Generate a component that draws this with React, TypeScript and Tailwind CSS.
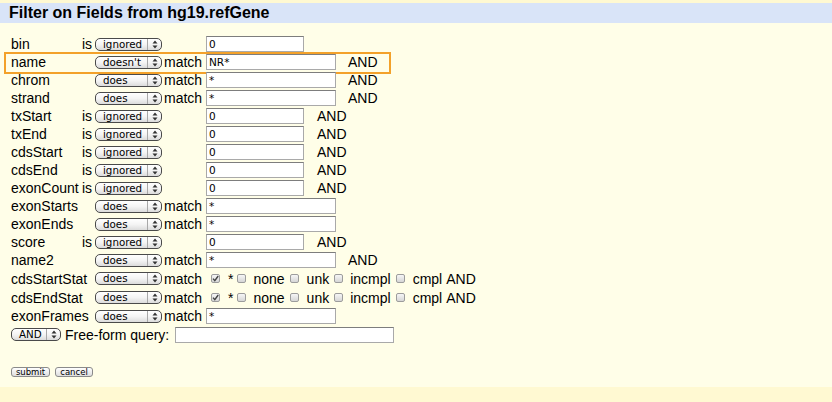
import React from "react";

type Field = {
  name: string;
  kind: "is" | "match" | "stat";
  op?: string;
  value?: string;
  and?: boolean;
  highlight?: boolean;
};

const fields: Field[] = [
  { name: "bin", kind: "is", value: "0" },
  { name: "name", kind: "match", op: "doesn't", value: "NR*", and: true, highlight: true },
  { name: "chrom", kind: "match", op: "does", value: "*", and: true },
  { name: "strand", kind: "match", op: "does", value: "*", and: true },
  { name: "txStart", kind: "is", value: "0", and: true },
  { name: "txEnd", kind: "is", value: "0", and: true },
  { name: "cdsStart", kind: "is", value: "0", and: true },
  { name: "cdsEnd", kind: "is", value: "0", and: true },
  { name: "exonCount", kind: "is", value: "0", and: true },
  { name: "exonStarts", kind: "match", op: "does", value: "*" },
  { name: "exonEnds", kind: "match", op: "does", value: "*" },
  { name: "score", kind: "is", value: "0", and: true },
  { name: "name2", kind: "match", op: "does", value: "*", and: true },
  { name: "cdsStartStat", kind: "stat", op: "does" },
  { name: "cdsEndStat", kind: "stat", op: "does" },
  { name: "exonFrames", kind: "match", op: "does", value: "*" },
];

function Arrows() {
  return (
    <svg width="6" height="9" viewBox="0 0 6 9">
      <path d="M0.5 3.6 L3 0.6 L5.5 3.6Z M0.5 5.4 L3 8.4 L5.5 5.4Z" fill="#333" />
    </svg>
  );
}

function Select({ value, w }: { value: string; w: string }) {
  return (
    <span
      className={`inline-flex h-[13px] items-stretch rounded-[5px] border border-[#4a4a4a] bg-gradient-to-b from-white via-[#f4f4f4] to-[#dcdcdc] font-['DejaVu_Sans',sans-serif] text-[10.3px] leading-none text-black ${w}`}
    >
      <span className="flex flex-1 items-center pl-[7px]">{value}</span>
      <span className="flex w-[14px] items-center justify-center border-l border-[#a8a8a8]">
        <Arrows />
      </span>
    </span>
  );
}

function TextBox({ value, w }: { value?: string; w: string }) {
  return (
    <span
      className={`flex h-[16px] items-center border border-[#a9a9a9] border-t-[#7d7d7d] bg-white pl-[2px] font-['DejaVu_Sans',sans-serif] text-[10.5px] leading-none ${w}`}
    >
      {value}
    </span>
  );
}

function Check({ checked }: { checked?: boolean }) {
  return (
    <span className="flex h-[9px] w-[9px] items-center justify-center rounded-[2px] border border-[#9c9c9c] bg-gradient-to-b from-[#f6f6f6] to-[#d6d6d6]">
      {checked && (
        <svg width="7" height="7" viewBox="0 0 7 7">
          <path d="M1 3.6 L2.8 5.6 L6.2 1" stroke="#444" strokeWidth="1.4" fill="none" />
        </svg>
      )}
    </span>
  );
}

function StatChecks() {
  return (
    <span className="flex items-center">
      <span className="ml-[5px]">
        <Check checked />
      </span>
      <span className="ml-[8px]">*</span>
      <span className="ml-[4px]">
        <Check />
      </span>
      <span className="ml-[7px]">none</span>
      <span className="ml-[5px]">
        <Check />
      </span>
      <span className="ml-[8px]">unk</span>
      <span className="ml-[5px]">
        <Check />
      </span>
      <span className="ml-[7px]">incmpl</span>
      <span className="ml-[5px]">
        <Check />
      </span>
      <span className="ml-[8px]">cmpl</span>
      <span className="ml-[4px]">AND</span>
    </span>
  );
}

function FieldRow({ f }: { f: Field }) {
  return (
    <div className={`relative flex items-center ${f.kind === "stat" ? "h-[19px]" : "h-[18px]"}`}>
      <span className="w-[71px] whitespace-nowrap">{f.name}</span>
      <span className="w-[13px]">{f.kind === "is" ? "is" : ""}</span>
      {f.kind === "is" ? (
        <Select value="ignored" w="w-[67px]" />
      ) : (
        <Select value={f.op ?? "does"} w="w-[67px]" />
      )}
      <span className="w-[44px] pl-[2px]">{f.kind === "is" ? "" : "match"}</span>
      {f.kind === "stat" ? (
        <StatChecks />
      ) : (
        <>
          <TextBox value={f.value} w={f.kind === "is" ? "w-[98px]" : "w-[130px]"} />
          {f.and && <span className={f.kind === "is" ? "ml-[13px]" : "ml-[12px]"}>AND</span>}
        </>
      )}
      {f.highlight && (
        <span className="pointer-events-none absolute left-[-7px] top-[-1px] h-[22px] w-[387px] border-2 border-[#f3a12a]" />
      )}
    </div>
  );
}

function SmallButton({ label, w }: { label: string; w: string }) {
  return (
    <span
      className={`flex h-[10px] items-center justify-center rounded-[3px] border border-[#8a8a8a] bg-gradient-to-b from-white to-[#dedede] font-['DejaVu_Sans',sans-serif] text-[8.5px] leading-none ${w}`}
    >
      {label}
    </span>
  );
}

export default function App() {
  return (
    <div className="h-[402px] w-[832px] bg-[#fff9d2] pt-[3px] font-['Liberation_Sans',Arial,sans-serif] text-[14px] leading-none text-black">
      <div className="h-[20px] bg-[#d9e4f8] pl-[9px] text-[16px] font-bold leading-[20px]">
        Filter on Fields from hg19.refGene
      </div>
      <div className="h-[364px] bg-[#fffee8] pl-[11px] pt-[12px]">
        {fields.map((f) => (
          <FieldRow key={f.name} f={f} />
        ))}
        <div className="flex h-[19px] items-center">
          <Select value="AND" w="w-[50px]" />
          <span className="ml-[4px]">Free-form query:</span>
          <span className="ml-[6px]">
            <TextBox w="w-[219px]" />
          </span>
        </div>
        <div className="mt-[23px] flex items-center gap-[5px]">
          <SmallButton label="submit" w="w-[39px]" />
          <SmallButton label="cancel" w="w-[38px]" />
        </div>
      </div>
    </div>
  );
}
